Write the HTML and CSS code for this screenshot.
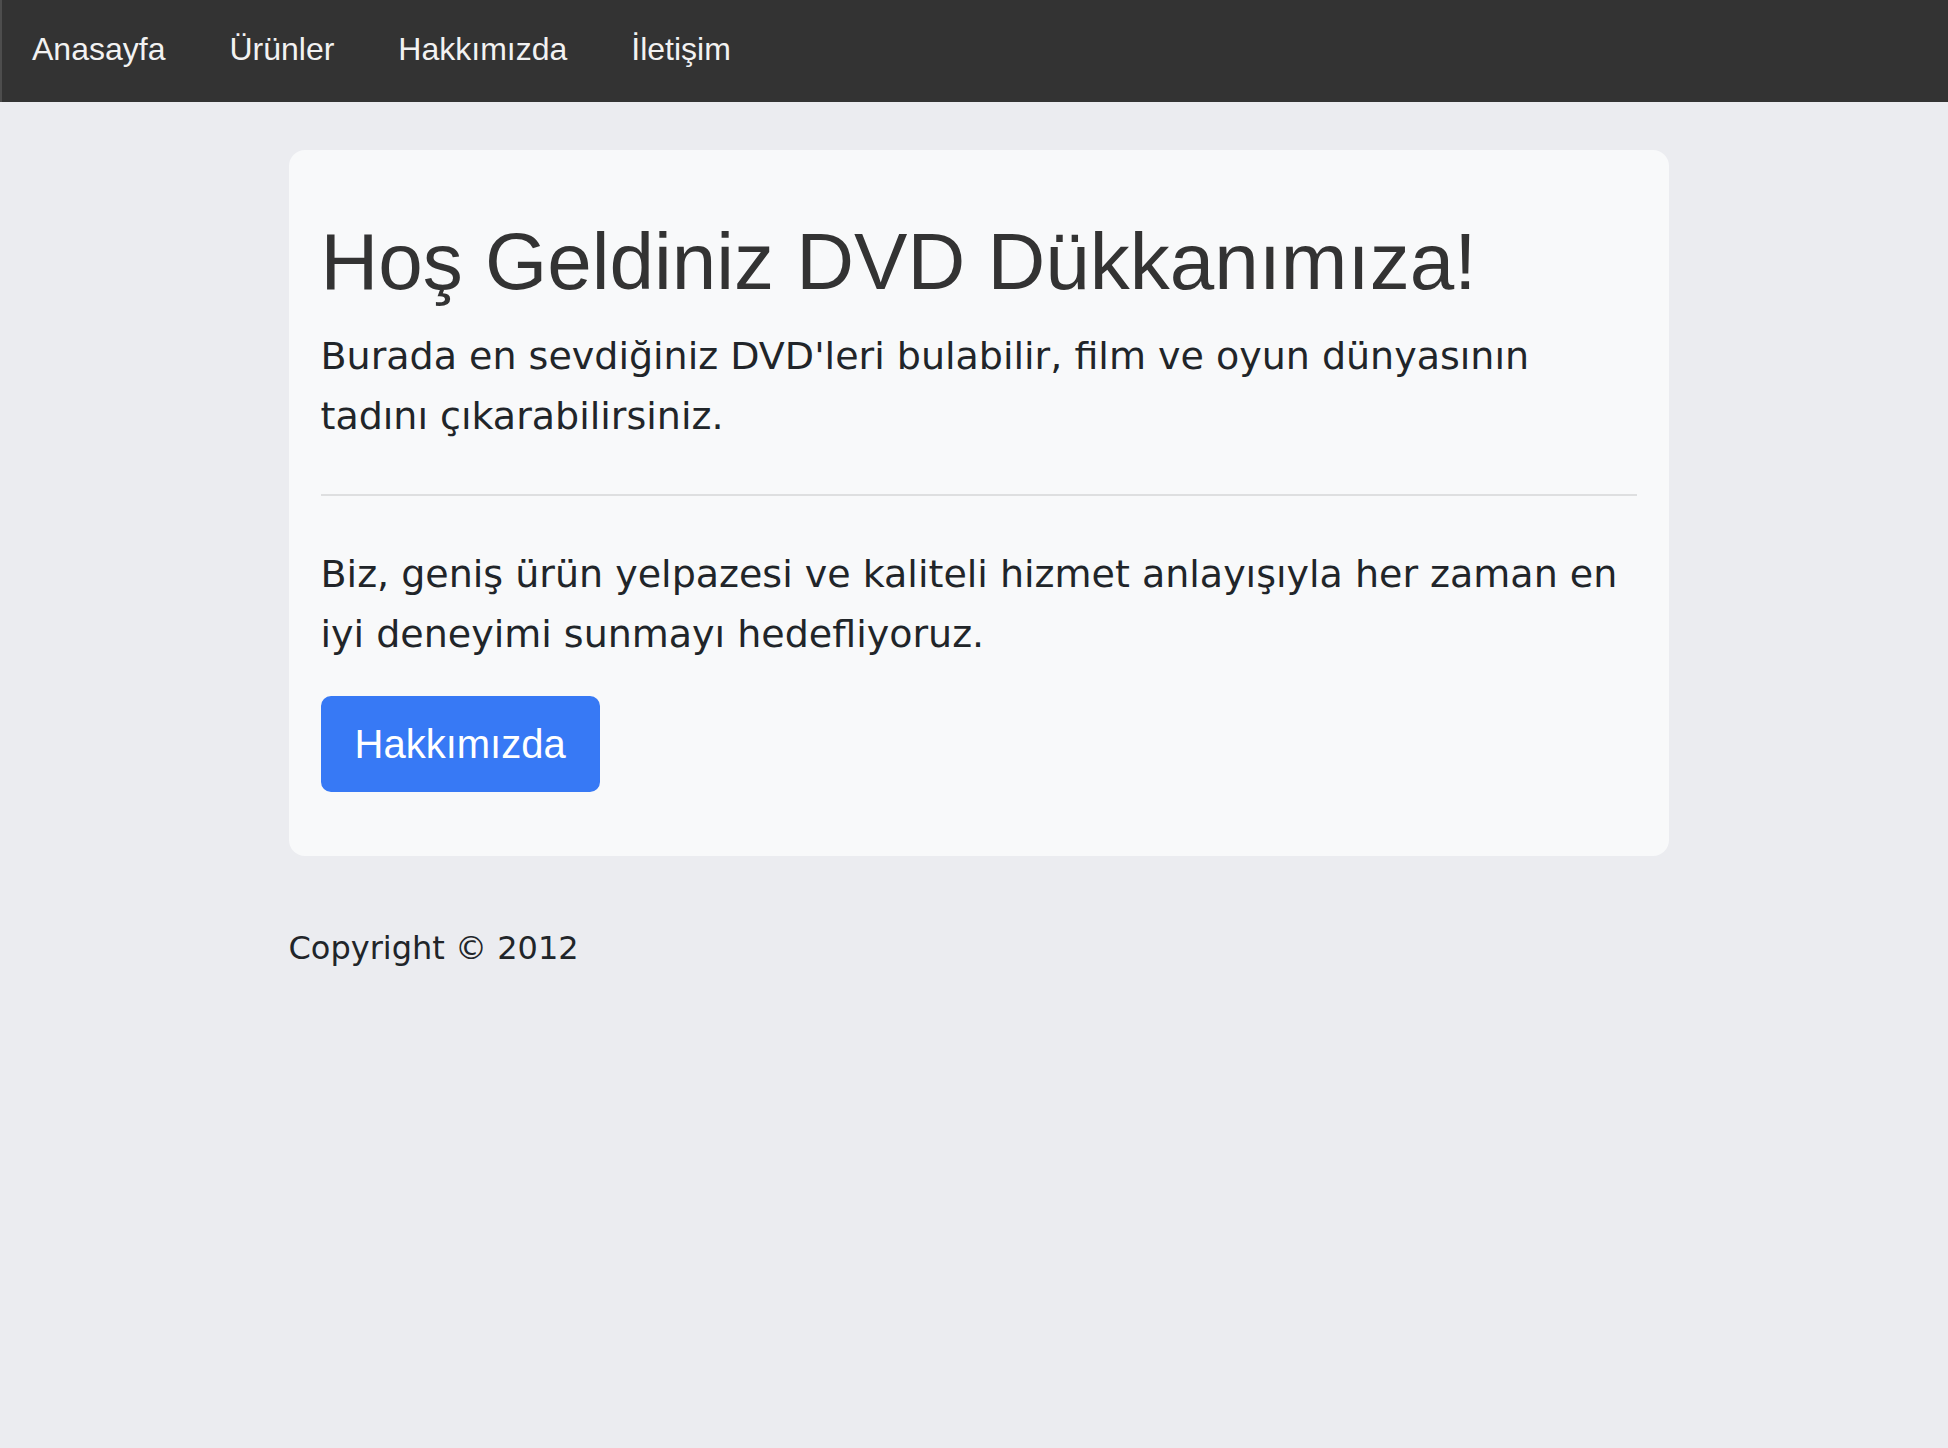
FILE: index.html
```html
<!DOCTYPE html>
<html lang="tr">
<head>
<meta charset="utf-8">
<title>DVD Dükkanı</title>
<link rel="stylesheet" href="styles.css">
</head>
<body>
<nav class="topnav">
  <a href="#">Anasayfa</a>
  <a href="#">Ürünler</a>
  <a href="#">Hakkımızda</a>
  <a href="#">İletişim</a>
</nav>
<main class="main">
  <div class="container">
    <section class="jumbotron">
      <h1 class="display">Hoş Geldiniz DVD Dükkanımıza!</h1>
      <p class="lead">Burada en sevdiğiniz DVD'leri bulabilir, film ve oyun dünyasının tadını çıkarabilirsiniz.</p>
      <hr class="divider">
      <p class="text">Biz, geniş ürün yelpazesi ve kaliteli hizmet anlayışıyla her zaman en iyi deneyimi sunmayı hedefliyoruz.</p>
      <a class="btn" href="#">Hakkımızda</a>
    </section>
    <footer class="footer">
      <p>Copyright © 2012</p>
    </footer>
  </div>
</main>
</body>
</html>
```

FILE: styles.css
```css
html, body {
  margin: 0;
  padding: 0;
}

body {
  min-height: 1448px;
  background: #ebecf0;
  color: #212529;
  font-family: "DejaVu Sans", Verdana, sans-serif;
  font-size: 32px;
  line-height: 1.5;
}

.topnav {
  display: flex;
  align-items: flex-start;
  height: 102px;
  background: #333333;
  border-left: 2px solid #4d4d4d;
  box-sizing: border-box;
}

.topnav a {
  display: block;
  padding: 31px 32px;
  color: #f2f2f2;
  text-decoration: none;
  font-family: "Liberation Sans", Arial, sans-serif;
  font-size: 32px;
  line-height: normal;
}

.topnav a:first-child {
  padding-left: 30px;
}

.main {
  padding-left: 9px;
}

.container {
  width: 1380px;
  margin: 0 auto;
}

.jumbotron {
  margin-top: 48px;
  margin-bottom: 68px;
  padding: 64px 32px;
  background: #f8f9fa;
  border-radius: 16px;
}

.display {
  margin: 0 0 16px;
  font-family: "Liberation Sans", Arial, sans-serif;
  font-size: 80px;
  font-weight: 400;
  line-height: 1.2;
  color: #333333;
}

.lead,
.text {
  margin: 0 0 32px;
  font-size: 38px;
  line-height: 60px;
}

.divider {
  margin: 48px 0;
  border: 0;
  border-top: 2px solid rgba(0, 0, 0, 0.1);
}

.btn {
  display: inline-block;
  padding: 16px 32px;
  border: 2px solid #3779f5;
  border-radius: 10px;
  background: #3779f5;
  color: #ffffff;
  text-decoration: none;
  font-family: "Liberation Sans", Arial, sans-serif;
  font-size: 40px;
  line-height: 60px;
  vertical-align: top;
}

.footer p {
  margin: 0;
  font-size: 32px;
  line-height: 48px;
}
```
